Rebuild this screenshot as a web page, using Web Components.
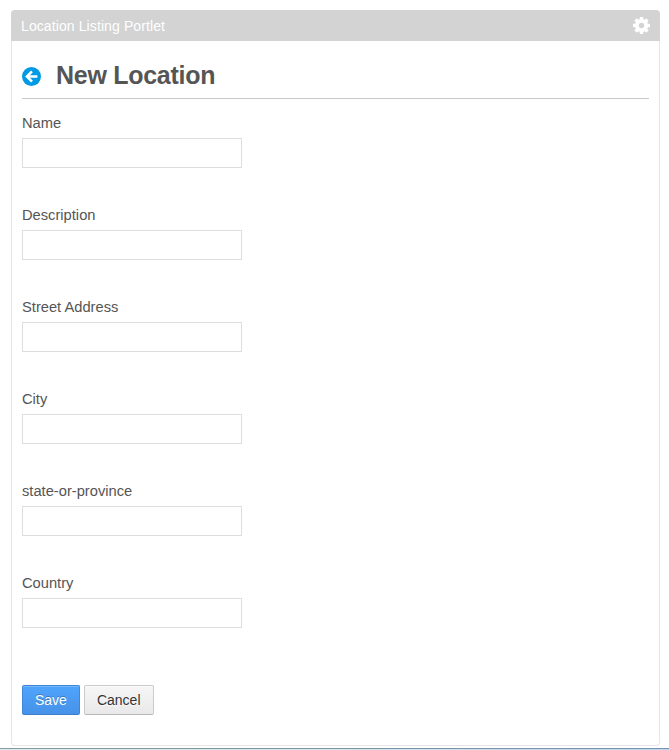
<!DOCTYPE html>
<html lang="en">
<head>
<meta charset="utf-8">
<title>Location Listing Portlet</title>
<style>
html, body { height: 100%; }
body { margin: 0; background: #fff; overflow: hidden; font-family: "Liberation Sans", Arial, sans-serif; color: #555; }
</style>
</head>
<body>
<page-frame>
  <portlet-box heading="Location Listing Portlet">
    <page-title>New Location</page-title>
    <text-field label="Name"></text-field>
    <text-field label="Description"></text-field>
    <text-field label="Street Address"></text-field>
    <text-field label="City"></text-field>
    <text-field label="state-or-province"></text-field>
    <text-field label="Country"></text-field>
    <button-row>
      <action-button primary>Save</action-button>
      <action-button>Cancel</action-button>
    </button-row>
  </portlet-box>
</page-frame>
<script>
const define = (name, render) => customElements.define(name, class extends HTMLElement {
  connectedCallback() {
    if (this.shadowRoot) return;
    this.attachShadow({ mode: 'open' }).innerHTML = render(this);
  }
});

define('page-frame', () => `
<style>
:host { display: flex; flex-direction: column; box-sizing: border-box; height: 750px; padding: 10px 0 0 0; }
main { flex: none; height: 736px; margin: 0 9px 0 11px; }
footer { margin-top: 2px; height: 2px; box-sizing: border-box; border-top: 1px solid #849a9f;
  background: linear-gradient(90deg, #d9eeee, #d3e8f0 50%, #bcd8ee);
  border-image: linear-gradient(90deg, #8a9c9c, #8095a0 50%, #7893ad) 1; }
</style>
<main><slot></slot></main><footer></footer>`);

define('portlet-box', el => `
<style>
:host { display: flex; flex-direction: column; height: 100%; }
header { flex: none; display: flex; align-items: center; justify-content: space-between; box-sizing: border-box;
  height: 31px; padding: 0 10px; background: #d3d3d3; color: #fff; border-radius: 4px 4px 0 0; font-size: 14px; line-height: 31px; letter-spacing: 0.1px; }
span { padding-top: 1px; }
svg { width: 17px; height: 17px; fill: #fff; display: block; }
section { flex: 1; box-sizing: border-box; border: 1px solid #e6e6e6; border-top: 0; border-radius: 0 0 4px 4px; padding: 18px 10px 0; }
</style>
<header><span>${el.getAttribute('heading')}</span>
<svg viewBox="128 128 1536 1536"><path d="M1152 896q0-106-75-181t-181-75-181 75-75 181 75 181 181 75 181-75 75-181zm512-109v222q0 12-8 23t-20 13l-185 28q-19 54-39 91 35 50 107 138 10 12 10 25t-9 23q-27 37-99 108t-94 71q-12 0-26-9l-138-108q-44 23-91 38-16 136-29 186-7 28-36 28h-222q-14 0-24.5-8.5t-11.5-21.5l-28-184q-49-16-90-37l-141 107q-10 9-25 9-14 0-25-11-126-114-165-168-7-10-7-23 0-12 8-23 15-21 51-66.500t54-70.500q-27-50-41-99l-183-27q-13-2-21-12.500t-8-23.500v-222q0-12 8-23t19-13l186-28q14-46 39-92-40-57-107-138-10-12-10-24 0-10 9-23 26-36 98.500-107.500t94.500-71.500q13 0 26 10l138 107q44-23 91-38 16-136 29-186 7-28 36-28h222q14 0 24.500 8.500t11.500 21.500l28 184q49 16 90 37l142-107q9-9 24-9 13 0 25 10 129 119 165 170 7 8 7 22 0 12-8 23-15 21-51 66.500t-54 70.500q26 50 41 98l183 28q13 2 21 12.500t8 23.500z"/></svg></header>
<section><slot></slot></section>`);

define('page-title', () => `
<style>
:host { display: flex; align-items: center; box-sizing: border-box; height: 40px; margin: 0 0 14px; padding-bottom: 6px; border-bottom: 1px solid #c8c9ca; }
svg { flex: none; width: 19px; height: 19px; margin: 2px 15px 0 0; }
h1 { margin: 0; font-size: 25px; line-height: 31px; font-weight: bold; letter-spacing: -0.28px; }
</style>
<svg viewBox="0 0 19 19"><circle cx="9.5" cy="9.5" r="9.5" fill="#009ae5"/><path d="M10 4.400 4.900 9.500l5.100 5.100M5.400 9.500h10" fill="none" stroke="#fff" stroke-width="2.500"/></svg>
<h1><slot></slot></h1>`);

define('text-field', el => `
<style>
:host { display: block; height: 92px; }
label { display: block; font-size: 14.7px; line-height: 20px; }
input { display: block; box-sizing: border-box; width: 220px; height: 30px; margin: 5px 0 0; padding: 4px 6px; border: 1px solid #ddd; border-radius: 0; background: #fff; font: inherit; outline: 0; }
</style>
<label for="f">${el.getAttribute('label')}</label><input id="f" type="text">`);

define('button-row', () => `
<style>:host { display: flex; gap: 4px; margin-top: 20px; }</style><slot></slot>`);

define('action-button', () => `
<style>
:host { display: block; }
button { display: block; box-sizing: border-box; height: 30px; padding: 0 12px; margin: 0; font: 14px/28px "Liberation Sans", Arial, sans-serif;
  color: #333; border: 1px solid #cbcbcb; border-bottom-color: #b8b8b8; border-radius: 2px; background: linear-gradient(#f6f6f6, #e9e9e9);
  box-shadow: inset 0 1px 0 rgba(255,255,255,.5); text-shadow: 0 1px 1px rgba(255,255,255,.75); }
:host([primary]) button { color: #fff; border-color: #3f87d8; border-bottom-color: #3b7fca; background: linear-gradient(#50a4fc, #4692e8);
  box-shadow: inset 0 1px 0 rgba(255,255,255,.2); text-shadow: 0 -1px 0 rgba(0,0,0,.25); }
</style>
<button type="button"><slot></slot></button>`);
</script>
</body>
</html>
